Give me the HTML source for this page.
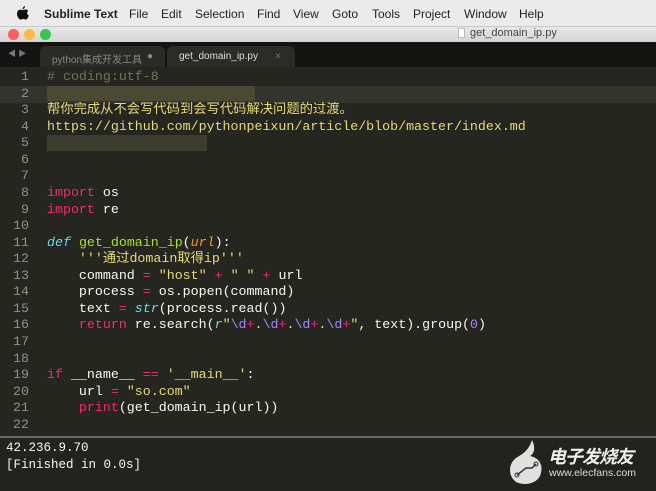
<!DOCTYPE html>
<html><head><meta charset="utf-8"><style>
*{margin:0;padding:0;box-sizing:border-box}
body{width:656px;height:491px;overflow:hidden;background:#272822;font-family:"Liberation Sans","Noto Sans CJK SC",sans-serif;position:relative}
.menu{position:absolute;top:0;left:0;width:656px;height:27px;background:#ebebeb;border-bottom:1px solid #c8c8c8;font-size:12px;color:#222}
.menu span{position:absolute;top:7px}
.title{position:absolute;top:27px;left:0;width:656px;height:15px;background:linear-gradient(#e8e8e8,#d4d4d4);font-size:11px;color:#444}
.dot{position:absolute;top:29px;width:11px;height:11px;border-radius:50%}
.tabs{position:absolute;top:42px;left:0;width:656px;height:25px;background:#141412}
.tab{position:absolute;top:4px;height:21px;border-radius:6px 6px 0 0;font-size:10px;padding-top:5px}
.ed{position:absolute;top:67px;left:0;width:656px;height:366px;background:#252620}
.ln{position:absolute;left:0;width:29px;text-align:right;color:#8f908a;font:13.3px/16.57px "Liberation Mono",monospace}
.code{position:absolute;left:47px;white-space:pre;color:#f8f8f2;font:13.3px/16.57px "Liberation Mono","Noto Sans CJK SC",monospace}
.k{color:#f92672}.s{color:#e6db74}.f{color:#a6e22e}.i{color:#66d9ef;font-style:italic}.o{color:#fd971f;font-style:italic}.p{color:#ae81ff}.c{color:#75715e}
.out{position:absolute;top:436px;left:0;width:656px;height:55px;background:#22231e;border-top:2px solid #6a6a66}
</style></head><body>
<div class="menu">
<svg style="position:absolute;left:17px;top:6px" width="12" height="14" viewBox="0 0 12 14"><path d="M8 0 C8 2 6.5 3.3 5.5 3.2 C5.4 1.6 7 0.2 8 0Z M6 4 C7 4 8 3.4 9 3.5 C10 3.6 10.8 4.1 11.3 4.8 C9.5 5.9 9.8 8.6 11.8 9.4 C11.3 11 10.2 13.6 8.8 13.6 C7.8 13.6 7.5 13 6.2 13 C5 13 4.6 13.6 3.6 13.6 C2.2 13.6 0 10.6 0 7.6 C0 5 1.7 3.6 3.3 3.6 C4.4 3.6 5.2 4 6 4Z" fill="#111"/></svg>
<span style="left:44px;font-weight:bold">Sublime Text</span>
<span style="left:129px">File</span><span style="left:161px">Edit</span><span style="left:195px">Selection</span><span style="left:257px">Find</span><span style="left:293px">View</span><span style="left:332px">Goto</span><span style="left:372px">Tools</span><span style="left:413px">Project</span><span style="left:464px">Window</span><span style="left:519px">Help</span>
</div>
<div class="title"><span style="position:absolute;left:458px;top:1px;width:7px;height:10px;background:#fff;border:1px solid #bbb"></span><span style="position:absolute;left:470px;top:0">get_domain_ip.py</span></div>
<div class="dot" style="left:8px;background:#fc605c"></div><div class="dot" style="left:24px;background:#fdbc40"></div><div class="dot" style="left:40px;background:#34c84a"></div>
<div class="tabs">
<span style="position:absolute;left:8px;top:6px;color:#777;font-size:8px">◀ ▶</span>
<div class="tab" style="left:40px;width:125px;background:#2a2a27;color:#888;padding-left:12px">python集成开发工具<span style="position:absolute;right:12px">●</span></div>
<div class="tab" style="left:167px;width:128px;background:#2b2c26;color:#ddd;padding-left:12px">get_domain_ip.py<span style="position:absolute;right:14px;color:#777">×</span></div>
</div>
<div class="ed">
<div style="position:absolute;top:19px;left:0;width:656px;height:17px;background:#33342e"></div>
<div style="position:absolute;top:19px;left:47px;width:208px;height:15px;background:#4a4a34"></div>
<div style="position:absolute;top:68px;left:47px;width:160px;height:16px;background:#3d3d2f"></div>
<div class="ln" style="top:2px">1<br>2<br>3<br>4<br>5<br>6<br>7<br>8<br>9<br>10<br>11<br>12<br>13<br>14<br>15<br>16<br>17<br>18<br>19<br>20<br>21<br>22</div>
<div class="code" style="top:2px"><span class="c"># coding:utf-8</span>

<span class="s">帮你完成从不会写代码到会写代码解决问题的过渡。</span>
<span class="s">https://github.com/pythonpeixun/article/blob/master/index.md</span>



<span class="k">import</span> os
<span class="k">import</span> re

<span class="i">def</span> <span class="f">get_domain_ip</span>(<span class="o">url</span>):
    <span class="s">'''通过domain取得ip'''</span>
    command <span class="k">=</span> <span class="s">"host"</span> <span class="k">+</span> <span class="s">" "</span> <span class="k">+</span> url
    process <span class="k">=</span> os.popen(command)
    text <span class="k">=</span> <span class="i">str</span>(process.read())
    <span class="k">return</span> re.search(<span class="i">r</span><span class="s">"</span><span class="p">\d</span><span class="k">+</span><span class="s">.</span><span class="p">\d</span><span class="k">+</span><span class="s">.</span><span class="p">\d</span><span class="k">+</span><span class="s">.</span><span class="p">\d</span><span class="k">+</span><span class="s">"</span>, text).group(<span class="p">0</span>)


<span class="k">if</span> __name__ <span class="k">==</span> <span class="s">'__main__'</span>:
    url <span class="k">=</span> <span class="s">"so.com"</span>
    <span class="k">print</span>(get_domain_ip(url))
</div>
</div>
<div class="out">
<div style="position:absolute;left:6px;top:2px;white-space:pre;color:#f8f8f2;font:12.5px/17px 'Liberation Mono',monospace">42.236.9.70
[Finished in 0.0s]</div>
<svg style="position:absolute;left:506px;top:0" width="40" height="50" viewBox="0 0 40 50"><path d="M26 2 C30 10 28 16 24 18 C34 20 38 28 34 38 C30 46 18 48 10 44 C2 38 2 26 10 20 C16 16 22 14 26 2Z" fill="#e0e0e0"/><path d="M11 37 L20 30 L26 30 L30 26" stroke="#333" stroke-width="1.5" fill="none"/><circle cx="11" cy="37" r="2" fill="none" stroke="#333"/><circle cx="30" cy="26" r="2" fill="none" stroke="#333"/></svg>
<div style="position:absolute;left:548px;top:5px;color:#eee;font-size:18px;font-weight:bold;font-style:italic;font-family:'Noto Sans CJK SC',sans-serif;letter-spacing:-1px">电子发烧友</div>
<div style="position:absolute;left:549px;top:29px;color:#ddd;font-size:10.5px">www.elecfans.com</div>
</div>
</body></html>
